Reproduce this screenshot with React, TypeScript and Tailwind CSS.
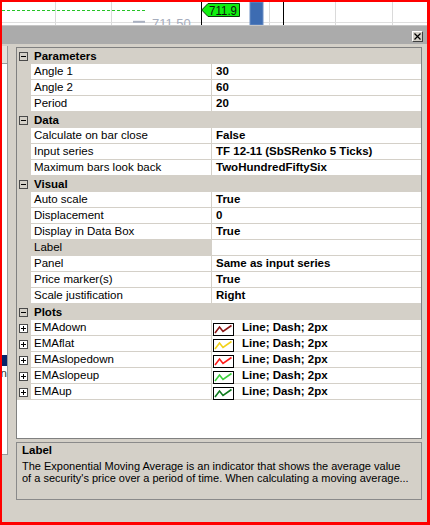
import React from "react";

type Row = { name: string; value: string; selected?: boolean };
type Section = { title: string; rows: Row[] };

const sections: Section[] = [
  {
    title: "Parameters",
    rows: [
      { name: "Angle 1", value: "30" },
      { name: "Angle 2", value: "60" },
      { name: "Period", value: "20" },
    ],
  },
  {
    title: "Data",
    rows: [
      { name: "Calculate on bar close", value: "False" },
      { name: "Input series", value: "TF 12-11 (SbSRenko 5 Ticks)" },
      { name: "Maximum bars look back", value: "TwoHundredFiftySix" },
    ],
  },
  {
    title: "Visual",
    rows: [
      { name: "Auto scale", value: "True" },
      { name: "Displacement", value: "0" },
      { name: "Display in Data Box", value: "True" },
      { name: "Label", value: "", selected: true },
      { name: "Panel", value: "Same as input series" },
      { name: "Price marker(s)", value: "True" },
      { name: "Scale justification", value: "Right" },
    ],
  },
];

const plots = [
  { name: "EMAdown", color: "#8b1515" },
  { name: "EMAflat", color: "#f2d21a" },
  { name: "EMAslopedown", color: "#ff1a1a" },
  { name: "EMAslopeup", color: "#3ccf3c" },
  { name: "EMAup", color: "#0e7a1e" },
];

function ExpandBox({ open, filled }: { open: boolean; filled?: boolean }) {
  return (
    <svg width="9" height="9" viewBox="0 0 9 9" className="block">
      <rect x="0.5" y="0.5" width="8" height="8" fill={filled ? "#ffffff" : "none"} stroke="#4a4a4a" />
      <line x1="2" y1="4.5" x2="7" y2="4.5" stroke="#000" />
      {!open && <line x1="4.5" y1="2" x2="4.5" y2="7" stroke="#000" />}
    </svg>
  );
}

function CategoryRow({ title }: { title: string }) {
  return (
    <div className="flex h-[16px] bg-[#d4d0c8]">
      <div className="w-[14px] flex items-center pl-[2px]">
        <ExpandBox open />
      </div>
      <div className="pl-[3px] font-bold leading-[16px]">{title}</div>
    </div>
  );
}

function PropRow({ row }: { row: Row }) {
  return (
    <div className="flex h-[16px]">
      <div className="w-[14px] bg-[#d4d0c8]" />
      <div
        className={
          "w-[180px] pl-[3px] leading-[15px] border-b border-[#d4d0c8] whitespace-nowrap overflow-hidden " +
          (row.selected ? "bg-[#d4d0c8]" : "bg-white")
        }
      >
        {row.name}
      </div>
      <div className="w-px bg-[#d4d0c8]" />
      <div className="flex-1 pl-[4px] leading-[15px] font-bold bg-white border-b border-[#d4d0c8] whitespace-nowrap overflow-hidden">
        {row.value}
      </div>
    </div>
  );
}

function PlotIcon({ color }: { color: string }) {
  return (
    <svg width="21" height="13" viewBox="0 0 21 13" className="block">
      <rect x="0.5" y="0.5" width="20" height="12" fill="#ffffff" stroke="#000" />
      <polyline
        points="2,10 6.5,4 10,8.5 18.5,2.5"
        fill="none"
        stroke={color}
        strokeWidth="1.6"
        strokeLinejoin="miter"
      />
    </svg>
  );
}

function PlotRow({ name, color }: { name: string; color: string }) {
  return (
    <div className="flex h-[16px]">
      <div className="w-[14px] bg-[#d4d0c8] flex items-center pl-[2px]">
        <ExpandBox open={false} filled />
      </div>
      <div className="w-[180px] pl-[3px] leading-[15px] bg-white border-b border-[#d4d0c8]">{name}</div>
      <div className="w-px bg-[#d4d0c8]" />
      <div className="flex-1 flex items-start bg-white border-b border-[#d4d0c8]">
        <div className="pl-[1px] pt-[3px]">
          <PlotIcon color={color} />
        </div>
        <span className="pl-[8px] leading-[15px] font-bold">Line; Dash; 2px</span>
      </div>
    </div>
  );
}

function ChartStrip() {
  const grid = [53, 109, 267, 333, 390];
  return (
    <svg width="425" height="23" viewBox="0 0 425 23" className="block shrink-0 bg-white">
      {grid.map((x) => (
        <line key={x} x1={x + 0.5} y1="0" x2={x + 0.5} y2="23" stroke="#dadada" />
      ))}
      <line x1="0" y1="20.5" x2="425" y2="20.5" stroke="#dedede" />
      <line x1="0" y1="8.5" x2="143" y2="8.5" stroke="#27c427" strokeDasharray="3 2" />
      <line x1="199.5" y1="0" x2="199.5" y2="23" stroke="#000" />
      <rect x="248" y="0" width="13" height="23" fill="#3d6cb2" stroke="#6d8fc4" />
      <line x1="281.5" y1="0" x2="281.5" y2="23" stroke="#000" />
      <polygon
        points="199.7,8 206,1.5 237.5,1.5 237.5,14.5 206,14.5"
        fill="#10f010"
        stroke="#0a3a0a"
      />
      <text
        x="207"
        y="12.8"
        fontSize="12.5"
        fill="#111"
        textLength="28"
        lengthAdjust="spacingAndGlyphs"
        style={{ fontFamily: "'Liberation Sans', Arial, sans-serif" }}
      >
        711.9
      </text>
      <line x1="131" y1="19.8" x2="143" y2="19.8" stroke="#a9b0c0" strokeWidth="2" />
      <text
        x="150"
        y="25.6"
        fontSize="13"
        fill="#a6adbd"
        style={{ fontFamily: "'Liberation Sans', Arial, sans-serif" }}
      >
        711.50
      </text>
    </svg>
  );
}

function CloseButton() {
  return (
    <div className="w-[11px] h-[11px] bg-[#d4d0c8] border border-t-white border-l-white border-r-[#404040] border-b-[#404040] flex items-center justify-center">
      <svg width="7" height="7" viewBox="0 0 7 7" className="block">
        <path d="M0.5 0.5 L6.5 6.5 M6.5 0.5 L0.5 6.5" stroke="#000" strokeWidth="1.2" />
      </svg>
    </div>
  );
}

export default function App() {
  return (
    <div className="w-[430px] h-[525px] bg-[#ff0000] pt-[2px] pl-[2px] pr-[3px] pb-[3px] flex flex-col overflow-hidden text-[11.5px] text-black [font-family:'Liberation_Sans',Arial,sans-serif]">
      <ChartStrip />
      <div className="flex-1 flex flex-col bg-[#d4d0c8]">
        {/* dialog caption */}
        <div className="h-[19px] shrink-0 bg-[#ababab] border-t border-[#c6c6c6] flex items-start justify-end pr-[4px] pt-[5px]">
          <CloseButton />
        </div>
        <div className="flex-1 flex">
          {/* edge of the neighbouring indicator list */}
          <div className="w-[6px] pt-[2px]">
            <div className="h-[409px] bg-white border-r border-b border-[#9a9a9a] flex flex-col overflow-hidden">
              <div className="h-[18px] shrink-0 bg-[#e4e2dc] border-b border-[#9a9a9a]" />
              <div className="h-[291px] shrink-0" />
              <div className="h-[11px] shrink-0 bg-[#0a246a]" />
              <div className="h-[14px] shrink-0 flex justify-end leading-[14px] text-[#333]">
                <span className="whitespace-nowrap">Average on</span>
              </div>
            </div>
          </div>
          <div className="ml-[8px] w-[406px] flex flex-col pt-[3px]">
            {/* property grid */}
            <div className="h-[392px] border border-[#808080] bg-white flex flex-col">
              {sections.map((s) => (
                <React.Fragment key={s.title}>
                  <CategoryRow title={s.title} />
                  {s.rows.map((r) => (
                    <PropRow key={r.name} row={r} />
                  ))}
                </React.Fragment>
              ))}
              <CategoryRow title="Plots" />
              {plots.map((p) => (
                <PlotRow key={p.name} name={p.name} color={p.color} />
              ))}
              <div className="flex-1 bg-white" />
            </div>
            {/* description */}
            <div className="mt-[3px] h-[58px] border border-[#8a8a8a] bg-[#d4d0c8] pl-[5px] overflow-hidden text-[11px]">
              <div className="font-bold text-[11.5px] leading-[15px]">Label</div>
              <div className="mt-[2px] leading-[12px] whitespace-nowrap">
                The Exponential Moving Average is an indicator that shows the average value
              </div>
              <div className="leading-[12px] whitespace-nowrap">
                of a security's price over a period of time. When calculating a moving average...
              </div>
            </div>
          </div>
        </div>
      </div>
    </div>
  );
}
